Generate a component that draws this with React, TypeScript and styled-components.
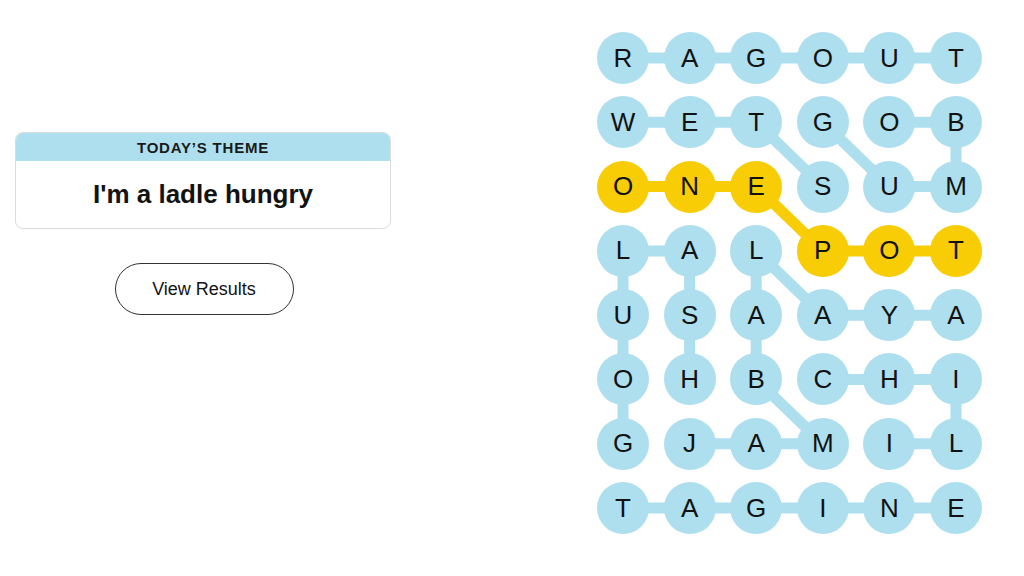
import React from 'react';
import styled, { createGlobalStyle } from 'styled-components';

const GlobalStyle = createGlobalStyle`
    html, body {
        margin: 0;
        padding: 0;
        background: #fff;
    }
    body {
        font-family: "Liberation Sans", Arial, sans-serif;
        color: #121212;
    }
`;

const BLUE = '#aedfee';
const YELLOW = '#f8cd05';
const CELL = 52;
const COL_GAP = 14.6;
const ROW_GAP = 12.3;

const letters = [
    'RAGOUT',
    'WETGOB',
    'ONESUM',
    'LALPOT',
    'USAAYA',
    'OHBCHI',
    'GJAMIL',
    'TAGINE',
];

type Cell = [number, number];

const words: { path: Cell[]; spangram?: boolean }[] = [
    { path: [[0, 0], [0, 1], [0, 2], [0, 3], [0, 4], [0, 5]] },
    { path: [[2, 3], [1, 2], [1, 1], [1, 0]] },
    { path: [[1, 3], [2, 4], [2, 5], [1, 5], [1, 4]] },
    { path: [[6, 0], [5, 0], [4, 0], [3, 0], [3, 1], [4, 1], [5, 1]] },
    { path: [[6, 1], [6, 2], [6, 3], [5, 2], [4, 2], [3, 2], [4, 3], [4, 4], [4, 5]] },
    { path: [[5, 3], [5, 4], [5, 5], [6, 5], [6, 4]] },
    { path: [[7, 0], [7, 1], [7, 2], [7, 3], [7, 4], [7, 5]] },
    { path: [[2, 0], [2, 1], [2, 2], [3, 3], [3, 4], [3, 5]], spangram: true },
];

const spangramCells = new Set(
    words.filter(w => w.spangram).flatMap(w => w.path.map(([r, c]) => `${r}-${c}`))
);

const Page = styled.div`
    display: flex;
    align-items: flex-start;
    width: 1024px;
    height: 576px;
    overflow: hidden;
`;

const LeftPanel = styled.div`
    width: 376px;
    margin-left: 15px;
    padding-top: 132px;
    display: flex;
    flex-direction: column;
    align-items: center;
`;

const ThemeCard = styled.div`
    width: 100%;
    box-sizing: border-box;
    border: 1px solid #dcdcdc;
    border-radius: 8px;
    overflow: hidden;
    background: #fff;
`;

const ThemeHeader = styled.div`
    height: 28px;
    background: ${BLUE};
    display: flex;
    align-items: center;
    justify-content: center;
    font-size: 15px;
    font-weight: 700;
    letter-spacing: 0.8px;
    text-transform: uppercase;
    color: #1a1a1a;
`;

const ThemeTitle = styled.div`
    height: 67px;
    display: flex;
    align-items: center;
    justify-content: center;
    font-size: 26px;
    font-weight: 700;
    color: #121212;
`;

const ResultsButton = styled.button`
    margin-top: 34px;
    margin-left: 2px;
    width: 179px;
    height: 52px;
    border-radius: 26px;
    border: 1px solid #333;
    background: #fff;
    font-family: "Liberation Sans", Arial, sans-serif;
    font-size: 18px;
    color: #121212;
    cursor: pointer;
`;

const Board = styled.div`
    position: relative;
    margin-left: 206px;
    margin-top: 32px;
`;

const Lines = styled.svg`
    position: absolute;
    left: 0;
    top: 0;
    z-index: 0;
    overflow: visible;
`;

const Grid = styled.div`
    position: relative;
    z-index: 1;
    display: grid;
    grid-template-columns: repeat(6, ${CELL}px);
    grid-auto-rows: ${CELL}px;
    column-gap: ${COL_GAP}px;
    row-gap: ${ROW_GAP}px;
`;

const Letter = styled.div<{ $spangram?: boolean }>`
    width: ${CELL}px;
    height: ${CELL}px;
    border-radius: 50%;
    background: ${p => (p.$spangram ? YELLOW : BLUE)};
    display: flex;
    align-items: center;
    justify-content: center;
    font-size: 26px;
    color: #121212;
    text-transform: uppercase;
`;

const center = ([r, c]: Cell) => ({
    x: CELL / 2 + c * (CELL + COL_GAP),
    y: CELL / 2 + r * (CELL + ROW_GAP),
});

const App = () => {
    const width = 6 * CELL + 5 * COL_GAP;
    const height = 8 * CELL + 7 * ROW_GAP;
    return (
        <Page>
            <GlobalStyle />
            <LeftPanel>
                <ThemeCard>
                    <ThemeHeader>Today’s theme</ThemeHeader>
                    <ThemeTitle>I'm a ladle hungry</ThemeTitle>
                </ThemeCard>
                <ResultsButton>View Results</ResultsButton>
            </LeftPanel>
            <Board>
                <Lines width={width} height={height}>
                    {words.map((w, i) => {
                        const pts = w.path.map(center).map(p => `${p.x},${p.y}`).join(' ');
                        return (
                            <polyline
                                key={i}
                                points={pts}
                                fill="none"
                                stroke={w.spangram ? YELLOW : BLUE}
                                strokeWidth={11}
                                strokeLinejoin="round"
                                strokeLinecap="round"
                            />
                        );
                    })}
                </Lines>
                <Grid>
                    {letters.map((row, r) =>
                        row.split('').map((ch, c) => (
                            <Letter key={`${r}-${c}`} $spangram={spangramCells.has(`${r}-${c}`)}>
                                {ch}
                            </Letter>
                        ))
                    )}
                </Grid>
            </Board>
        </Page>
    );
};

export default App;
